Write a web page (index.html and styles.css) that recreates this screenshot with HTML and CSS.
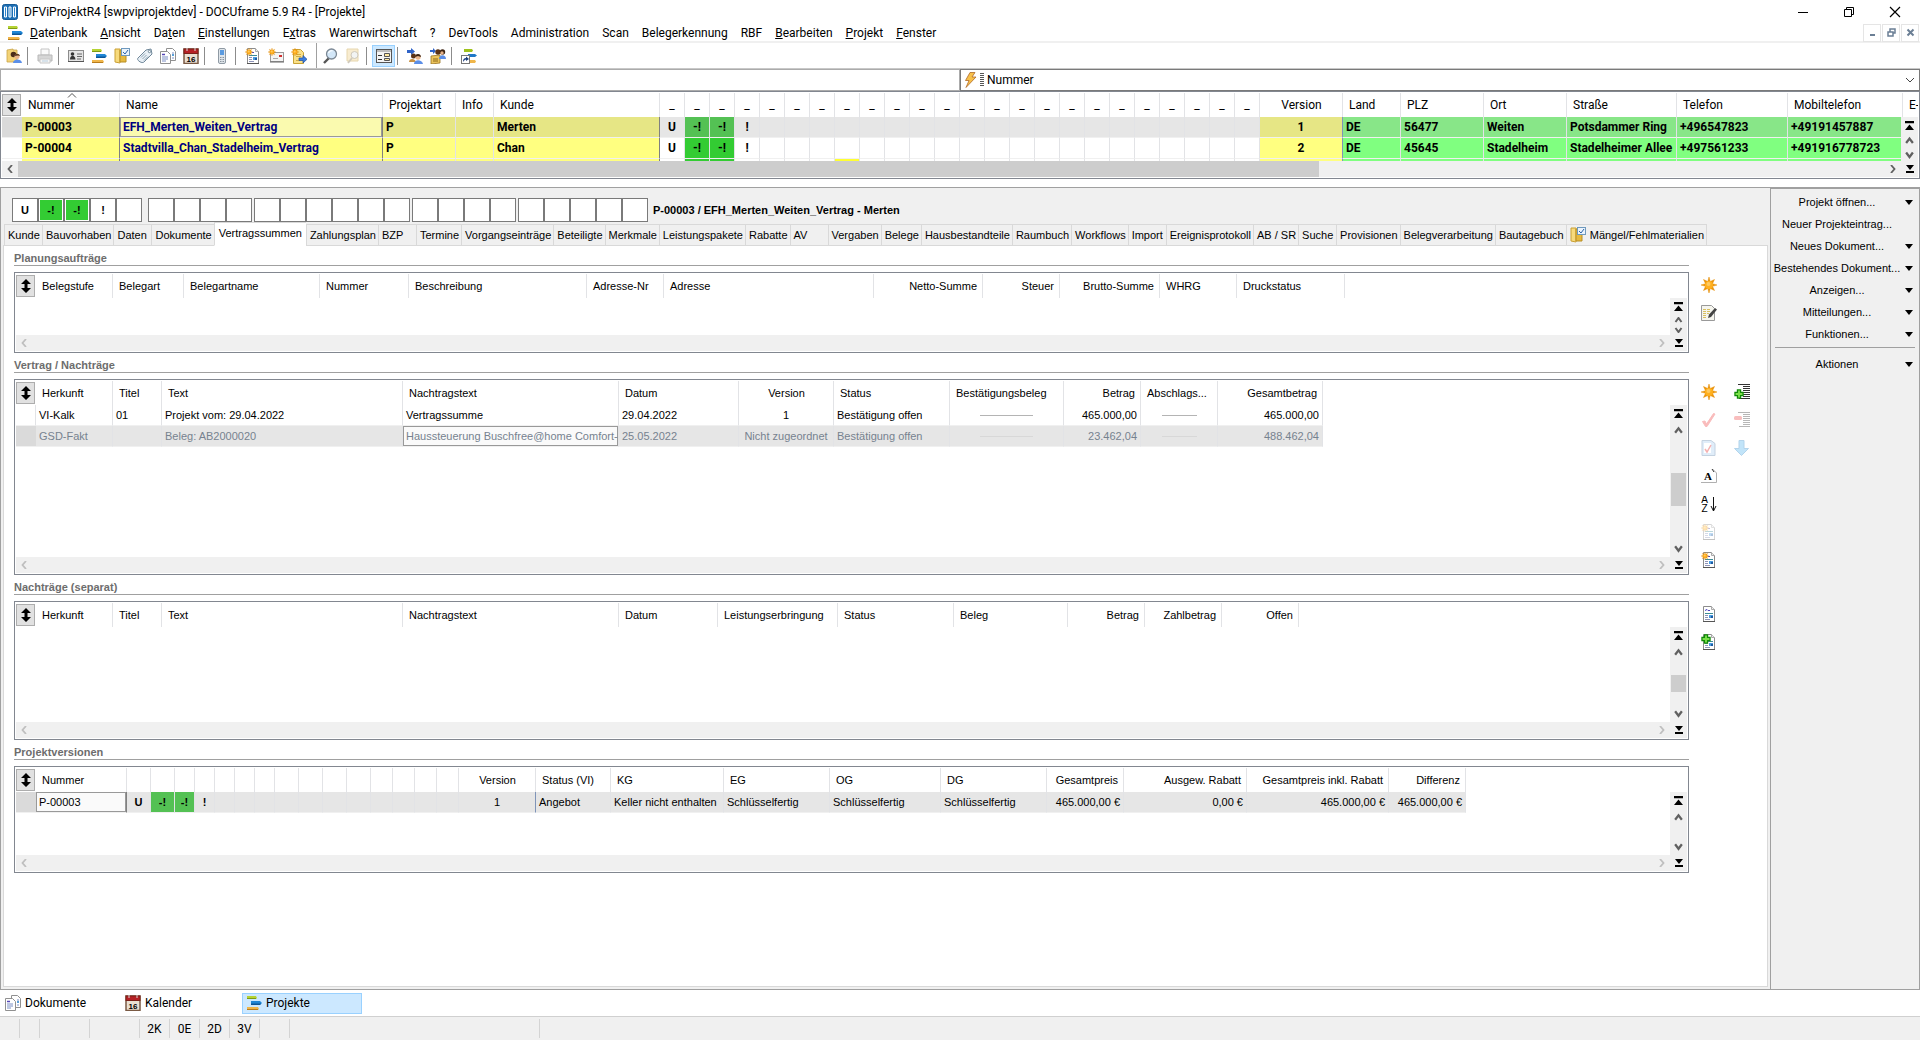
FILE: index.html
```html
<!DOCTYPE html>
<html lang="de">
<head>
    <meta charset="UTF-8">
    <meta name="viewport" content="width=device-width, initial-scale=1.0">
    <title>DFViProjektR4 [swpviprojektdev] - DOCUframe 5.9 R4 - [Projekte]</title>
    <link rel="stylesheet" href="styles.css">
</head>
<body>

    <!-- Icon sheet -->
    <svg class="sheet" aria-hidden="true">
        <symbol id="i-app" viewBox="0 0 16 16"><rect x=".5" y=".5" width="15" height="15" rx="2" fill="#1c6fb5" stroke="#175c98"/><path d="M2.500 3h2v10h-2zM7 3h2v10H7zM11.500 3h2v10h-2z" fill="#2f86cc" stroke="#fff"/></symbol>
        <symbol id="i-bars" viewBox="0 0 16 16"><path d="M1 1h9l1 2-1 1H1z" fill="#b5d334"/><path d="M1 3h9v1H1z" fill="#7f9b12"/><path d="M5 6h9l2 2-2 2H5z" fill="#1f86d6"/><path d="M5 8.500h10L14 10H5z" fill="#0c5698"/><path d="M1 12h11l1 2-1 1H1z" fill="#f0b64a"/><path d="M1 14h11v1H1z" fill="#b87c1c"/></symbol>
        <symbol id="i-userfolder" viewBox="0 0 16 16"><path d="M1 2l6-1v1h4v12H1z" fill="#f3d377" stroke="#c9a548" stroke-width=".8"/><circle cx="7.500" cy="6.500" r="2.800" fill="#4a2d1a"/><circle cx="11" cy="8.500" r="2.500" fill="#e8b48a"/><path d="M8.500 8c0-3 5-3 5.500 0l-2-.5z" fill="#5a3a20"/><path d="M7 15c0-4 8-5 9 0z" fill="#5b8fe8"/></symbol>
        <symbol id="i-printer" viewBox="0 0 16 16"><path d="M4 1h8v6H4z" fill="#fafafa" stroke="#c4c4c4"/><path d="M1 7h14v6H1z" fill="#d6d6d6" stroke="#b8b8b8"/><path d="M3 11h10v4H3z" fill="#f4f4f4" stroke="#c8c8c8"/><path d="M5 13h6" stroke="#b8cfe0"/></symbol>
        <symbol id="i-card" viewBox="0 0 16 16"><rect x=".5" y="2.500" width="15" height="11" fill="#e4e4e4" stroke="#8c8c8c"/><path d="M0 13.500h16" stroke="#555"/><circle cx="4.500" cy="6" r="1.800" fill="#333"/><path d="M2 11.500c0-5 5-5 5.500 0z" fill="#333"/><path d="M9 6h5M9 8.500h5M9 11h4" stroke="#666"/></symbol>
        <symbol id="i-foldercheck" viewBox="0 0 16 16"><path d="M1 1h5v14l-5-1z" fill="#f7da7c" stroke="#caa034"/><path d="M6 2h6v12H6z" fill="#e6b93e" stroke="#b88d22"/><rect x="7.500" y=".5" width="8" height="7" fill="#eaf3fc" stroke="#6f99bd"/><path d="M9 4l2 2 3-4" fill="none" stroke="#2b62a8"/></symbol>
        <symbol id="i-tag" viewBox="0 0 16 16"><path d="M1 10l8-8 5-1 1 5-8 8c-2 2-8-2-6-4z" fill="#e9f0f6" stroke="#6f8799"/><circle cx="12.500" cy="3.500" r="1.200" fill="#fff" stroke="#6f8799"/><path d="M4 9.500l4-4M5.500 11l4-4M7 12.500l4-4" stroke="#8fa5b5"/></symbol>
        <symbol id="i-docs" viewBox="0 0 16 16"><path d="M6.500.5h6l3 3v9h-9z" fill="#fff" stroke="#909090"/><path d="M.5 3.500h7l3 3v9H.5z" fill="#fff" stroke="#909090"/><path d="M2 6.500h3" stroke="#5546b8" stroke-width="1.500"/><path d="M2 9h6M2 11h6M2 13h4M12 5h2M12 7h2M12 10h2" stroke="#7a8ec4"/><path d="M12 6h2v2h-2z" fill="#58a0d8"/></symbol>
        <symbol id="i-calendar" viewBox="0 0 16 16"><rect x="1" y="1" width="14" height="14.500" fill="#eadfd2" stroke="#7a5a44" stroke-width="1.500"/><rect x="1" y="1" width="14" height="4.500" fill="#b62025" stroke="#7a2018"/><path d="M4 0v3M12 0v3" stroke="#ddd"/><text x="8" y="13.500" text-anchor="middle" class="cal-day">16</text></symbol>
        <symbol id="i-phone" viewBox="0 0 16 16"><rect x="4.500" y=".5" width="7" height="15" rx="1.500" fill="#dfe5ea" stroke="#8f9aa4"/><rect x="6" y="2" width="4" height="5" fill="#5b9be0"/><path d="M6 9.500h4M6 11.500h4M6 13.500h4" stroke="#8a949e" stroke-dasharray="1 .5"/></symbol>
        <symbol id="i-doc" viewBox="0 0 16 16"><path d="M2.500.5h8l3 3v12h-11z" fill="#fff" stroke="#8c8c8c"/><path d="M10.500.5v3h3" fill="#eee" stroke="#aaa"/><path d="M2 15.500h12" stroke="#555"/><path d="M4 4.500l2-1 1 1h2" fill="none" stroke="#4a3fc0"/><path d="M4 7.500h8" stroke="#3c8c96"/><path d="M4 9.500h3M4 11.500h3M4 13.500h5" stroke="#8d93b8"/><path d="M8 9h4v3H8z" fill="#4a9be0"/><path d="M10 10h2v2h-2z" fill="#1d5aa0"/></symbol>
        <symbol id="i-spark" viewBox="0 0 16 16"><path d="M8 0l1.200 4.500L13.500 2.500l-2 4.200L16 8l-4.500 1.300 2 4.200-4.300-2L8 16l-1.200-4.500-4.300 2 2-4.200L0 8l4.500-1.300-2-4.200 4.300 2z" fill="#e8920c" stroke="#e8920c" stroke-width=".5"/><circle cx="8" cy="8" r="4" fill="#ffb01e"/><circle cx="7.500" cy="7" r="2" fill="#ffc95e"/></symbol>
        <symbol id="i-plus" viewBox="0 0 16 16"><path d="M5.500 1.500h5v4h4v5h-4v4h-5v-4h-4v-5h4z" fill="#7be04a" stroke="#118a08" stroke-width="2"/></symbol>
        <symbol id="i-newdoc" viewBox="0 0 16 16"><use href="#i-doc"/><use href="#i-spark" width="8" height="8"/></symbol>
        <symbol id="i-docplus" viewBox="0 0 16 16"><use href="#i-doc"/><use href="#i-plus" width="10" height="10"/></symbol>
        <symbol id="i-mail" viewBox="0 0 16 16"><rect x="2.500" y="4.500" width="13" height="9" fill="#f4f4f4" stroke="#9a9a9a"/><path d="M2 14h14" stroke="#666"/><rect x="11" y="7" width="3" height="2" fill="#d03030"/><path d="M5 10.500h5" stroke="#aaa"/><use href="#i-spark" width="8" height="8"/></symbol>
        <symbol id="i-export" viewBox="0 0 16 16"><path d="M2.500 1.500h7l3 3v11h-10z" fill="#f9e08a" stroke="#c9a336"/><path d="M5 6.500h5M5 8.500h5M5 12.500h4" stroke="#d2ac44"/><path d="M8 10h4V7.500l4 3.800-4 3.700v-2.500H8z" fill="#3b7de0" stroke="#1c4f9e" stroke-width=".7"/><use href="#i-spark" width="8" height="8"/></symbol>
        <symbol id="i-lens" viewBox="0 0 16 16"><path d="M7 10l-5 5" stroke="#555" stroke-width="2.400"/><circle cx="9.500" cy="6" r="5" fill="#d3e7f8" stroke="#7c8894" stroke-width="1.300"/><path d="M6.500 5c1-2 3-2.500 4-2" stroke="#fff" fill="none" stroke-width="1.300"/></symbol>
        <symbol id="i-lensfolder" viewBox="0 0 16 16"><path d="M2 1h11v12H2z" fill="#f8ecd0" stroke="#e6d6ae"/><circle cx="9.500" cy="7" r="3.500" fill="#f2f4f4" stroke="#cfc9bb"/><path d="M7 10l-4 5" stroke="#cfc9bb" stroke-width="1.800"/></symbol>
        <symbol id="i-form" viewBox="0 0 16 16"><rect x=".5" y="1.500" width="15" height="13" fill="#f4f4f4" stroke="#555"/><path d="M1 3h14" stroke="#888"/><path d="M2 7.500h4M2 11.500h4" stroke="#333"/><path d="M8.500 5.500h5v3h-5zM8.500 10.500h5v2h-5z" fill="#ffe9a0" stroke="#555"/></symbol>
        <symbol id="i-people" viewBox="0 0 16 16"><path d="M0 2h4V0l4 3.500L4 7V5H0z" fill="#2f63c8"/><circle cx="6.500" cy="8" r="2.500" fill="#5a3216"/><circle cx="11" cy="9" r="2.700" fill="#e8b48a"/><path d="M8 9c0-4 6-4 6 0l-3-1z" fill="#3d2412"/><path d="M2 14c0-4 6-4 7 0z" fill="#c89040"/><path d="M7 16c0-5 8-5 9 0z" fill="#5b8fe8"/></symbol>
        <symbol id="i-peoplefolder" viewBox="0 0 16 16"><path d="M1 8l9-1v8l-9 1z" fill="#ecc45c" stroke="#9a7420" stroke-width=".8"/><path d="M3 11h5M3 13h5" stroke="#8c6818"/><path d="M0 2h3V0l3 3-3 3V4H0z" fill="#2f63c8"/><circle cx="8" cy="4" r="2.700" fill="#5a3216"/><circle cx="12.500" cy="4" r="2.700" fill="#3d2412"/><circle cx="12" cy="5" r="1.700" fill="#e8b48a"/><path d="M9 11c0-5 7-5 7 0z" fill="#5b8fe8"/></symbol>
        <symbol id="i-link" viewBox="0 0 16 16"><path d="M3 1h8l1 1.500L11 4H3z" fill="#9fc21c"/><path d="M7 6h7l2 1.500L14 9H7z" fill="#1f78c8"/><path d="M9 12h5l1 1.500-1 1.500H9z" fill="#f0b64a"/><rect x=".5" y="7.500" width="8" height="8" fill="#fff" stroke="#777"/><path d="M2 14c0-3 1-4 3-4V8.500L8 11l-3 2v-1.500c-1 0-2 1-3 2.500z" fill="#1c3f80"/></symbol>
        <symbol id="i-notepen" viewBox="0 0 16 16"><path d="M.5.500h10l3 3v12H.5z" fill="#f5f5ee" stroke="#999"/><path d="M2 4.500h8M2 6.500h8M2 8.500h6M2 10.500h4M2 12.500h4" stroke="#d8c060" stroke-dasharray="3 1"/><path d="M7 13l1-3.500L14 3l2 1.500L10 12z" fill="#444"/></symbol>
        <symbol id="i-lines" viewBox="0 0 16 16"><path d="M4 .5h12M9 2.500h7M9 4.500h7M9 6.500h7M9 8.500h7M9 10.500h7M9 12.500h7M5 14.500h11" stroke="#333"/></symbol>
        <symbol id="i-addrow" viewBox="0 0 16 16"><use href="#i-lines"/><use href="#i-plus" x="0" y="5" width="10" height="10"/></symbol>
        <symbol id="i-delrow" viewBox="0 0 16 16"><use href="#i-lines"/><rect x="0" y="4" width="8" height="4" rx="1.500" fill="#f04848"/></symbol>
        <symbol id="i-check" viewBox="0 0 16 16"><path d="M1.500 9.500L4 9l1.500 3L12.500 1.500l1.500.5L6 14.500H4.500z" fill="#f04040" stroke="#f04040"/></symbol>
        <symbol id="i-doccheck" viewBox="0 0 16 16"><path d="M1 .5h9l4 3v12H1z" fill="#a8cdf0" stroke="#5a7fa8"/><path d="M3 3h7v10H3z" fill="#fff"/><path d="M4 9l2 3 4-7" fill="none" stroke="#e02020" stroke-width="1.500"/></symbol>
        <symbol id="i-down" viewBox="0 0 16 16"><path d="M5 .5h5v8h4.500L7.500 15.500.5 8.500H5z" fill="#4fb4f0" stroke="#2a86c8"/></symbol>
        <symbol id="i-pagea" viewBox="0 0 16 16"><path d="M0 14.500h15.500V5l-4-4" fill="none" stroke="#b0b0b0"/><path d="M11 1l2 3" stroke="#333"/><text x="7" y="12" text-anchor="middle" class="letter-serif">A</text></symbol>
        <symbol id="i-az" viewBox="0 0 16 16"><text x="3.500" y="7" text-anchor="middle" class="letter">A</text><text x="3.500" y="16" text-anchor="middle" class="letter">Z</text><path d="M12.500 1v14M10 10l2.500 5 2.500-5" fill="none" stroke="#111"/></symbol>
        <symbol id="i-flash" viewBox="0 0 16 16"><path d="M7 .5h5L9 5h4L3 15.500 6 8.500H2.500z" fill="#f7c04a" stroke="#b06a28" stroke-width=".8"/></symbol>
        <symbol id="i-updown" viewBox="0 0 10 14"><path d="M5 0l5 5H6.500v4H10l-5 5-5-5h3.500V5H0z" fill="#000"/></symbol>
        <symbol id="i-first" viewBox="0 0 8 8"><path d="M0 0h8v2H0zM4 3l4 5H0z" fill="#000"/></symbol>
        <symbol id="i-last" viewBox="0 0 8 8"><path d="M0 6h8v2H0zM0 0h8L4 5z" fill="#000"/></symbol>
        <symbol id="i-up" viewBox="0 0 8 6"><path d="M1 5l3-4 3 4" fill="none" stroke="#606060" stroke-width="2"/></symbol>
        <symbol id="i-dn" viewBox="0 0 8 6"><path d="M1 1l3 4 3-4" fill="none" stroke="#606060" stroke-width="2"/></symbol>
        <symbol id="i-left" viewBox="0 0 6 8"><path d="M5 0L1.500 4 5 8" fill="none" stroke="currentColor" stroke-width="1.800"/></symbol>
        <symbol id="i-right" viewBox="0 0 6 8"><path d="M1 0l3.500 4L1 8" fill="none" stroke="currentColor" stroke-width="1.800"/></symbol>
        <symbol id="i-min" viewBox="0 0 12 12"><path d="M1 6.500h10" stroke="currentColor"/></symbol>
        <symbol id="i-restore" viewBox="0 0 12 12"><path d="M1.500 3.500h7v7h-7zM3.500 3.500v-2h7v7h-2" fill="none" stroke="currentColor"/></symbol>
        <symbol id="i-close" viewBox="0 0 12 12"><path d="M1 1l10 10M11 1L1 11" stroke="currentColor" stroke-width="1.200"/></symbol>
        <symbol id="i-mdi-min" viewBox="0 0 9 9"><path d="M2 7h5" stroke="currentColor" stroke-width="2"/></symbol>
        <symbol id="i-mdi-restore" viewBox="0 0 9 9"><path d="M1 4h5v4H1zM3 4V1h5v4H6" fill="none" stroke="currentColor" stroke-width="1.500"/></symbol>
        <symbol id="i-mdi-close" viewBox="0 0 9 9"><path d="M1.500 1.500l6 6M7.500 1.500l-6 6" stroke="currentColor" stroke-width="2"/></symbol>
    </svg>

    <!-- Title bar -->
    <header class="titlebar">
        <svg class="icon-app"><use href="#i-app"/></svg>
        <h1>DFViProjektR4 [swpviprojektdev] - DOCUframe 5.9 R4 - [Projekte]</h1>
        <div class="window-buttons">
            <button aria-label="Minimieren"><svg><use href="#i-min"/></svg></button>
            <button aria-label="Wiederherstellen"><svg><use href="#i-restore"/></svg></button>
            <button aria-label="Schließen"><svg><use href="#i-close"/></svg></button>
        </div>
    </header>

    <!-- Menu -->
    <nav class="menubar">
        <svg class="icon"><use href="#i-bars"/></svg>
        <a href="#"><u>D</u>atenbank</a>
        <a href="#"><u>A</u>nsicht</a>
        <a href="#">Da<u>t</u>en</a>
        <a href="#"><u>E</u>instellungen</a>
        <a href="#">E<u>x</u>tras</a>
        <a href="#">Warenwirtschaft</a>
        <a href="#">?</a>
        <a href="#">DevTools</a>
        <a href="#">Administration</a>
        <a href="#">Scan</a>
        <a href="#">Belegerkennung</a>
        <a href="#">RBF</a>
        <a href="#"><u>B</u>earbeiten</a>
        <a href="#"><u>P</u>rojekt</a>
        <a href="#"><u>F</u>enster</a>
        <div class="mdi-buttons">
            <button aria-label="Fenster minimieren"><svg><use href="#i-mdi-min"/></svg></button>
            <button aria-label="Fenster wiederherstellen"><svg><use href="#i-mdi-restore"/></svg></button>
            <button aria-label="Fenster schließen"><svg><use href="#i-mdi-close"/></svg></button>
        </div>
    </nav>

    <!-- Toolbar -->
    <div class="toolbar" role="toolbar">
        <button aria-label="Adressen"><svg class="icon"><use href="#i-userfolder"/></svg></button>
        <span class="sep"></span>
        <button aria-label="Drucken"><svg class="icon"><use href="#i-printer"/></svg></button>
        <span class="sep"></span>
        <button aria-label="Visitenkarte"><svg class="icon"><use href="#i-card"/></svg></button>
        <button aria-label="Projekte"><svg class="icon"><use href="#i-bars"/></svg></button>
        <button aria-label="Aufgaben"><svg class="icon"><use href="#i-foldercheck"/></svg></button>
        <button aria-label="Artikel"><svg class="icon"><use href="#i-tag"/></svg></button>
        <button aria-label="Dokumente"><svg class="icon"><use href="#i-docs"/></svg></button>
        <button aria-label="Kalender"><svg class="icon"><use href="#i-calendar"/></svg></button>
        <span class="sep"></span>
        <button aria-label="Telefon"><svg class="icon"><use href="#i-phone"/></svg></button>
        <span class="sep"></span>
        <button aria-label="Neues Dokument"><svg class="icon"><use href="#i-newdoc"/></svg></button>
        <button aria-label="Neue Nachricht"><svg class="icon"><use href="#i-mail"/></svg></button>
        <button aria-label="Export"><svg class="icon"><use href="#i-export"/></svg></button>
        <span class="sep sep-band"></span>
        <button aria-label="Suchen"><svg class="icon"><use href="#i-lens"/></svg></button>
        <button aria-label="In Ordner suchen"><svg class="icon"><use href="#i-lensfolder"/></svg></button>
        <span class="sep"></span>
        <button class="pressed" aria-label="Maske"><svg class="icon"><use href="#i-form"/></svg></button>
        <span class="sep"></span>
        <button aria-label="Adresse zuordnen"><svg class="icon"><use href="#i-people"/></svg></button>
        <button aria-label="Ordner zuordnen"><svg class="icon"><use href="#i-peoplefolder"/></svg></button>
        <span class="sep"></span>
        <button aria-label="Verknüpfung"><svg class="icon"><use href="#i-link"/></svg></button>
    </div>

    <!-- Search -->
    <div class="search">
        <input type="text" aria-label="Suchbegriff">
        <div class="search-field">
            <svg class="icon"><use href="#i-flash"/></svg>
            <span class="grip"></span>
            <select aria-label="Suchfeld"><option>Nummer</option></select>
            <svg class="caret" viewBox="0 0 10 6"><path d="M1 1l4 4 4-4" fill="none" stroke="#444"/></svg>
        </div>
    </div>

    <!-- Project list -->
    <div class="list project-list">
        <div class="table-wrap">
            <table class="fill">
                <colgroup><col class="w20"><col class="w98"><col class="w263"><col class="w73"><col class="w38"><col class="w166"><col span="24" class="w25"><col class="w83"><col class="w58"><col class="w83"><col class="w83"><col class="w110"><col class="w111"><col class="w115"><col></colgroup>
                <thead>
                    <tr><th class="rowsel"><button aria-label="Sortierung"><svg><use href="#i-updown"/></svg></button></th><th class="sorted">Nummer<svg class="sort" viewBox="0 0 10 5"><path d="M1 4.500l4-4 4 4" fill="none" stroke="#555"/></svg></th><th>Name</th><th>Projektart</th><th>Info</th><th>Kunde</th><th class="m">_</th><th class="m">_</th><th class="m">_</th><th class="m">_</th><th class="m">_</th><th class="m">_</th><th class="m">_</th><th class="m">_</th><th class="m">_</th><th class="m">_</th><th class="m">_</th><th class="m">_</th><th class="m">_</th><th class="m">_</th><th class="m">_</th><th class="m">_</th><th class="m">_</th><th class="m">_</th><th class="m">_</th><th class="m">_</th><th class="m">_</th><th class="m">_</th><th class="m">_</th><th class="m">_</th><th class="center">Version</th><th>Land</th><th>PLZ</th><th>Ort</th><th>Straße</th><th>Telefon</th><th>Mobiltelefon</th><th class="last">E-</th></tr>
                </thead>
                <tbody>
                    <tr class="current"><td class="rowsel"></td><td class="yellow edge">P-00003</td><td class="yellow focus edge">EFH_Merten_Weiten_Vertrag</td><td class="yellow">P</td><td class="yellow"></td><td class="yellow edge">Merten</td><td class="center">U</td><td class="center flag">-!</td><td class="center flag">-!</td><td class="center">!</td><td></td><td></td><td></td><td></td><td></td><td></td><td></td><td></td><td></td><td></td><td></td><td></td><td></td><td></td><td></td><td></td><td></td><td></td><td></td><td></td><td class="yellow center edge-blue">1</td><td class="green">DE</td><td class="green">56477</td><td class="green">Weiten</td><td class="green">Potsdammer Ring</td><td class="green">+496547823</td><td class="green">+49191457887</td><td></td></tr>
                    <tr><td class="rowsel"></td><td class="yellow edge">P-00004</td><td class="yellow link edge">Stadtvilla_Chan_Stadelheim_Vertrag</td><td class="yellow">P</td><td class="yellow"></td><td class="yellow edge">Chan</td><td class="center">U</td><td class="center flag">-!</td><td class="center flag">-!</td><td class="center">!</td><td></td><td></td><td></td><td></td><td></td><td></td><td></td><td></td><td></td><td></td><td></td><td></td><td></td><td></td><td></td><td></td><td></td><td></td><td></td><td></td><td class="yellow center edge-blue">2</td><td class="green">DE</td><td class="green">45645</td><td class="green">Stadelheim</td><td class="green">Stadelheimer Allee</td><td class="green">+497561233</td><td class="green">+491916778723</td><td></td></tr>
                    <tr><td class="rowsel"></td><td class="yellow edge"></td><td class="yellow edge"></td><td class="yellow"></td><td class="yellow"></td><td class="yellow edge"></td><td></td><td class="flag"></td><td class="flag"></td><td></td><td></td><td></td><td></td><td class="bright"></td><td></td><td></td><td></td><td></td><td></td><td></td><td></td><td></td><td></td><td></td><td></td><td></td><td></td><td></td><td></td><td></td><td class="yellow edge-blue"></td><td class="green"></td><td class="green"></td><td class="green"></td><td class="green"></td><td class="green"></td><td class="green"></td><td></td></tr>
                </tbody>
            </table>
        </div>
        <div class="vscroll"><svg class="end"><use href="#i-first"/></svg><svg class="arrow"><use href="#i-up"/></svg><span class="track"></span><svg class="arrow"><use href="#i-dn"/></svg></div>
        <div class="hscroll"><svg><use href="#i-left"/></svg><span class="hthumb"></span><svg><use href="#i-right"/></svg></div>
        <div class="corner"><svg><use href="#i-last"/></svg></div>
    </div>

    <!-- Detail view of the selected project -->
    <main class="detail">
        <div class="project">
            <div class="project-head">
                <div class="badges"><span>U</span><span class="on">-!</span><span class="on">-!</span><span>!</span><span></span></div>
                <div class="badges"><span></span><span></span><span></span><span></span></div>
                <div class="badges"><span></span><span></span><span></span><span></span><span></span><span></span></div>
                <div class="badges"><span></span><span></span><span></span><span></span></div>
                <div class="badges"><span></span><span></span><span></span><span></span><span></span></div>
                <h2>P-00003 / EFH_Merten_Weiten_Vertrag - Merten</h2>
            </div>

            <div class="tabs" role="tablist">
                <button role="tab">Kunde</button>
                <button role="tab">Bauvorhaben</button>
                <button role="tab">Daten</button>
                <button role="tab">Dokumente</button>
                <button role="tab" class="active" aria-selected="true">Vertragssummen</button>
                <button role="tab">Zahlungsplan</button>
                <button role="tab">BZP</button>
                <button role="tab">Termine</button>
                <button role="tab">Vorgangseinträge</button>
                <button role="tab">Beteiligte</button>
                <button role="tab">Merkmale</button>
                <button role="tab">Leistungspakete</button>
                <button role="tab">Rabatte</button>
                <button role="tab">AV</button>
                <button role="tab">Vergaben</button>
                <button role="tab">Belege</button>
                <button role="tab">Hausbestandteile</button>
                <button role="tab">Raumbuch</button>
                <button role="tab">Workflows</button>
                <button role="tab">Import</button>
                <button role="tab">Ereignisprotokoll</button>
                <button role="tab">AB / SR</button>
                <button role="tab">Suche</button>
                <button role="tab">Provisionen</button>
                <button role="tab">Belegverarbeitung</button>
                <button role="tab">Bautagebuch</button>
                <button role="tab"><svg class="icon"><use href="#i-foldercheck"/></svg>Mängel/Fehlmaterialien</button>
            </div>

            <div class="page">
                <!-- Planungsaufträge -->
                <section>
                    <h3>Planungsaufträge</h3>
                    <div class="section-row">
                        <div class="list h-small">
                            <div class="table-wrap">
                                <table>
                                    <colgroup><col class="w20"><col class="w77"><col class="w71"><col class="w136"><col class="w89"><col class="w178"><col class="w77"><col class="w210"><col class="w109"><col class="w77"><col class="w100"><col class="w77"><col class="w108"></colgroup>
                                    <thead>
                                        <tr><th class="rowsel"><button aria-label="Sortierung"><svg><use href="#i-updown"/></svg></button></th><th>Belegstufe</th><th>Belegart</th><th>Belegartname</th><th>Nummer</th><th>Beschreibung</th><th>Adresse-Nr</th><th>Adresse</th><th class="right">Netto-Summe</th><th class="right">Steuer</th><th class="right">Brutto-Summe</th><th>WHRG</th><th>Druckstatus</th></tr>
                                    </thead>
                                </table>
                            </div>
                            <div class="vscroll"><svg class="end"><use href="#i-first"/></svg><svg class="arrow"><use href="#i-up"/></svg><span class="track"></span><svg class="arrow"><use href="#i-dn"/></svg></div>
                            <div class="hscroll off"><svg><use href="#i-left"/></svg><span></span><svg><use href="#i-right"/></svg></div>
                            <div class="corner"><svg><use href="#i-last"/></svg></div>
                        </div>
                        <div class="actions">
                            <button aria-label="Neu"><svg class="icon"><use href="#i-spark"/></svg></button>
                            <button aria-label="Bearbeiten"><svg class="icon"><use href="#i-notepen"/></svg></button>
                        </div>
                    </div>
                </section>

                <!-- Vertrag / Nachträge -->
                <section>
                    <h3>Vertrag / Nachträge</h3>
                    <div class="section-row">
                        <div class="list h-large">
                            <div class="table-wrap">
                                <table>
                                    <colgroup><col class="w20"><col class="w77"><col class="w49"><col class="w241"><col class="w216"><col class="w120"><col class="w95"><col class="w116"><col class="w114"><col class="w77"><col class="w77"><col class="w105"></colgroup>
                                    <thead>
                                        <tr><th class="rowsel"><button aria-label="Sortierung"><svg><use href="#i-updown"/></svg></button></th><th>Herkunft</th><th>Titel</th><th>Text</th><th>Nachtragstext</th><th>Datum</th><th class="center">Version</th><th>Status</th><th>Bestätigungsbeleg</th><th class="right">Betrag</th><th>Abschlags...</th><th class="right">Gesamtbetrag</th></tr>
                                    </thead>
                                    <tbody>
                                        <tr><td></td><td>VI-Kalk</td><td>01</td><td>Projekt vom: 29.04.2022</td><td>Vertragssumme</td><td>29.04.2022</td><td class="center">1</td><td>Bestätigung offen</td><td><span class="dash"></span></td><td class="right">465.000,00</td><td><span class="dash"></span></td><td class="right">465.000,00</td></tr>
                                        <tr class="current dim"><td class="rowsel"></td><td>GSD-Fakt</td><td></td><td>Beleg: AB2000020</td><td class="focus">Haussteuerung Buschfree@home Comfort-</td><td>25.05.2022</td><td class="center">Nicht zugeordnet</td><td>Bestätigung offen</td><td><span class="dash"></span></td><td class="right">23.462,04</td><td><span class="dash"></span></td><td class="right">488.462,04</td></tr>
                                    </tbody>
                                </table>
                            </div>
                            <div class="vscroll"><svg class="end"><use href="#i-first"/></svg><svg class="arrow"><use href="#i-up"/></svg><span class="track"><span class="thumb tall"></span></span><svg class="arrow"><use href="#i-dn"/></svg></div>
                            <div class="hscroll off"><svg><use href="#i-left"/></svg><span></span><svg><use href="#i-right"/></svg></div>
                            <div class="corner"><svg><use href="#i-last"/></svg></div>
                        </div>
                        <div class="actions">
                            <button aria-label="Neu"><svg class="icon"><use href="#i-spark"/></svg></button>
                            <button class="disabled" disabled aria-label="Bestätigen"><svg class="icon"><use href="#i-check"/></svg></button>
                            <button class="disabled" disabled aria-label="Beleg bestätigen"><svg class="icon"><use href="#i-doccheck"/></svg></button>
                            <button aria-label="Text"><svg class="icon"><use href="#i-pagea"/></svg></button>
                            <button aria-label="Sortieren"><svg class="icon"><use href="#i-az"/></svg></button>
                            <button class="disabled" disabled aria-label="Neuer Beleg"><svg class="icon"><use href="#i-newdoc"/></svg></button>
                            <button aria-label="Neues Dokument"><svg class="icon"><use href="#i-newdoc"/></svg></button>
                        </div>
                        <div class="actions">
                            <button aria-label="Zeile hinzufügen"><svg class="icon"><use href="#i-addrow"/></svg></button>
                            <button class="disabled" disabled aria-label="Zeile entfernen"><svg class="icon"><use href="#i-delrow"/></svg></button>
                            <button class="disabled" disabled aria-label="Nach unten"><svg class="icon"><use href="#i-down"/></svg></button>
                        </div>
                    </div>
                </section>

                <!-- Nachträge (separat) -->
                <section>
                    <h3>Nachträge (separat)</h3>
                    <div class="section-row">
                        <div class="list h-medium">
                            <div class="table-wrap">
                                <table>
                                    <colgroup><col class="w20"><col class="w77"><col class="w49"><col class="w241"><col class="w216"><col class="w99"><col class="w120"><col class="w116"><col class="w114"><col class="w77"><col class="w77"><col class="w77"></colgroup>
                                    <thead>
                                        <tr><th class="rowsel"><button aria-label="Sortierung"><svg><use href="#i-updown"/></svg></button></th><th>Herkunft</th><th>Titel</th><th>Text</th><th>Nachtragstext</th><th>Datum</th><th>Leistungserbringung</th><th>Status</th><th>Beleg</th><th class="right">Betrag</th><th class="right">Zahlbetrag</th><th class="right">Offen</th></tr>
                                    </thead>
                                </table>
                            </div>
                            <div class="vscroll"><svg class="end"><use href="#i-first"/></svg><svg class="arrow"><use href="#i-up"/></svg><span class="track"><span class="thumb"></span></span><svg class="arrow"><use href="#i-dn"/></svg></div>
                            <div class="hscroll off"><svg><use href="#i-left"/></svg><span></span><svg><use href="#i-right"/></svg></div>
                            <div class="corner"><svg><use href="#i-last"/></svg></div>
                        </div>
                        <div class="actions">
                            <button aria-label="Dokument"><svg class="icon"><use href="#i-doc"/></svg></button>
                            <button aria-label="Dokument hinzufügen"><svg class="icon"><use href="#i-docplus"/></svg></button>
                        </div>
                    </div>
                </section>

                <!-- Projektversionen -->
                <section>
                    <h3>Projektversionen</h3>
                    <div class="section-row">
                        <div class="list h-versions">
                            <div class="table-wrap">
                                <table>
                                    <colgroup><col class="w20"><col class="w91"><col span="2" class="w24"><col span="5" class="w20"><col span="4" class="w24"><col span="4" class="w22"><col class="w77"><col class="w75"><col class="w113"><col class="w106"><col class="w111"><col class="w106"><col class="w77"><col class="w123"><col class="w142"><col class="w77"></colgroup>
                                    <thead>
                                        <tr><th class="rowsel"><button aria-label="Sortierung"><svg><use href="#i-updown"/></svg></button></th><th>Nummer</th><th></th><th></th><th></th><th></th><th></th><th></th><th></th><th></th><th></th><th></th><th></th><th></th><th></th><th></th><th></th><th class="center">Version</th><th>Status (VI)</th><th>KG</th><th>EG</th><th>OG</th><th>DG</th><th class="right">Gesamtpreis</th><th class="right">Ausgew. Rabatt</th><th class="right">Gesamtpreis inkl. Rabatt</th><th class="right">Differenz</th></tr>
                                    </thead>
                                    <tbody>
                                        <tr class="current"><td class="rowsel"></td><td class="focus edge">P-00003</td><td class="center strong">U</td><td class="center strong flag">-!</td><td class="center strong flag">-!</td><td class="center strong">!</td><td></td><td></td><td></td><td></td><td></td><td></td><td></td><td></td><td></td><td></td><td></td><td class="center edge-blue">1</td><td>Angebot</td><td>Keller nicht enthalten</td><td>Schlüsselfertig</td><td>Schlüsselfertig</td><td>Schlüsselfertig</td><td class="right">465.000,00 €</td><td class="right">0,00 €</td><td class="right">465.000,00 €</td><td class="right">465.000,00 €</td></tr>
                                    </tbody>
                                </table>
                            </div>
                            <div class="vscroll"><svg class="end"><use href="#i-first"/></svg><svg class="arrow"><use href="#i-up"/></svg><span class="track"></span><svg class="arrow"><use href="#i-dn"/></svg></div>
                            <div class="hscroll off"><svg><use href="#i-left"/></svg><span></span><svg><use href="#i-right"/></svg></div>
                            <div class="corner"><svg><use href="#i-last"/></svg></div>
                        </div>
                        <div class="actions"></div>
                    </div>
                </section>
            </div>
        </div>

        <!-- Commands -->
        <aside class="commands">
            <button class="drop">Projekt öffnen...</button>
            <button>Neuer Projekteintrag...</button>
            <button class="drop">Neues Dokument...</button>
            <button class="drop">Bestehendes Dokument...</button>
            <button class="drop">Anzeigen...</button>
            <button class="drop">Mitteilungen...</button>
            <button class="drop">Funktionen...</button>
            <hr>
            <button class="drop">Aktionen</button>
        </aside>
    </main>

    <!-- Open windows -->
    <nav class="windows">
        <a href="#"><svg class="icon"><use href="#i-docs"/></svg>Dokumente</a>
        <a href="#"><svg class="icon"><use href="#i-calendar"/></svg>Kalender</a>
        <a href="#" class="active"><svg class="icon"><use href="#i-bars"/></svg>Projekte</a>
    </nav>

    <footer class="status">
        <span class="w20"></span><span class="w20"></span><span class="w50"></span><span class="w50"></span><span class="w30">2K</span><span class="w30">0E</span><span class="w30">2D</span><span class="w30">3V</span><span class="w30"></span><span class="w250"></span>
    </footer>

</body>
</html>
```

FILE: styles.css
```css
* {
    box-sizing: border-box;
}

body {
    display: flex;
    flex-direction: column;
    min-height: 100vh;
    margin: 0;
    font-family: Roboto, "Open Sans", sans-serif;
    font-size: 12px;
    color: #000;
    background-color: #fff;
}

button {
    display: flex;
    align-items: center;
    justify-content: center;
    margin: 0;
    padding: 0;
    border: none;
    background: none;
    font: inherit;
    color: inherit;
}

a {
    color: inherit;
    text-decoration: none;
}

h1, h2, h3 {
    margin: 0;
    font-size: inherit;
}

.sheet {
    display: none;
}

.icon {
    flex: none;
    width: 16px;
    height: 16px;
}

.cal-day {
    font: bold 8px "Liberation Sans", sans-serif;
}

.letter {
    font: 10px "Liberation Sans", sans-serif;
}

.letter-serif {
    font: bold 11px "Liberation Serif", serif;
}

/* Title bar */
.titlebar {
    display: flex;
    align-items: center;
    gap: 6px;
    height: 24px;
    padding-left: 2px;
}

.titlebar h1 {
    flex: 1;
    font-weight: normal;
}

.icon-app {
    width: 16px;
    height: 16px;
}

.window-buttons {
    display: flex;
    padding-right: 2px;
}

.window-buttons button {
    width: 46px;
    height: 20px;
}

.window-buttons svg {
    width: 12px;
    height: 12px;
}

/* Menu */
.menubar {
    display: flex;
    align-items: center;
    gap: 13px;
    height: 19px;
    padding-left: 7px;
    border-bottom: 2px solid #f0f0f0;
}

.menubar .icon {
    margin-right: -6px;
}

.mdi-buttons {
    display: flex;
    gap: 1px;
    margin-left: auto;
    padding-right: 1px;
}

.mdi-buttons button {
    width: 18px;
    height: 18px;
    border: 1px solid #e5e5e5;
    color: #6b7f95;
}

.mdi-buttons svg {
    width: 9px;
    height: 9px;
}

/* Toolbar */
.toolbar {
    display: flex;
    align-items: center;
    height: 26px;
    padding-left: 2px;
    border-bottom: 1px solid #c8c8c8;
}

.toolbar button {
    width: 23px;
    height: 22px;
}

.toolbar .pressed {
    background-color: #cce8ff;
    border: 1px solid #99d1ff;
}

.sep {
    width: 1px;
    height: 18px;
    margin: 0 5px 0 2px;
    background-color: #8c8c8c;
}

.sep-band {
    width: 1px;
    height: 25px;
    margin: 0 1px 0 6px;
    background-color: #a0a0a0;
}

/* Search */
.search {
    display: grid;
    grid-template-columns: 1fr 1fr;
    height: 22px;
}

.search input {
    border: 1px solid #ababab;
    font: inherit;
    outline: none;
}

.search-field {
    display: flex;
    align-items: center;
    gap: 1px;
    padding: 0 4px 0 2px;
    border: 1px solid #7a7a7a;
}

.search-field select {
    flex: 1;
    padding: 0 2px;
    border: none;
    background: none;
    font: inherit;
    appearance: none;
}

.grip {
    width: 4px;
    height: 14px;
    background: repeating-linear-gradient(#555 0 1px, #fff 1px 2px);
}

.caret {
    width: 10px;
    height: 6px;
}

/* Lists */
.list {
    display: grid;
    grid-template-columns: minmax(0, 1fr) 17px;
    grid-template-rows: 24px 1fr 16px;
    flex: 1;
    min-width: 0;
    padding: 1px;
    border: 1px solid #828790;
    background-color: #fff;
}

.project-list {
    flex: none;
    height: 88px;
}

.h-small {
    height: 81px;
}

.h-large {
    height: 196px;
}

.h-medium {
    height: 139px;
}

.h-versions {
    height: 107px;
}

.table-wrap {
    grid-area: 1 / 1 / 3 / 3;
    overflow: hidden;
}

table {
    width: 1px;
    table-layout: fixed;
    border-collapse: separate;
    border-spacing: 0;
}

table.fill {
    width: 100%;
}

th, td {
    overflow: hidden;
    border-right: 1px solid #e2e3e6;
    text-align: left;
    white-space: nowrap;
}

th {
    height: 24px;
    padding: 0 5px 0 6px;
    font-weight: normal;
}

th.last {
    padding-right: 0;
    border-right: none;
}

td {
    height: 21px;
    padding: 0 3px 1px;
    border-bottom: 1px solid #f0f0f0;
}

.center {
    text-align: center;
}

.right {
    text-align: right;
}

.strong {
    font-weight: bold;
}

th.m {
    text-align: center;
    padding: 0;
}

th.rowsel {
    padding: 0;
    border: none;
}

th.rowsel button {
    width: 19px;
    height: 22px;
    border: 1px solid #adadad;
    background-color: #e1e1e1;
}

th.rowsel svg {
    width: 10px;
    height: 14px;
}

td.rowsel {
    border-right: none;
}

th.sorted {
    position: relative;
}

.sort {
    position: absolute;
    top: 0;
    left: 45px;
    width: 10px;
    height: 5px;
}

.project-list td {
    font-weight: bold;
}

.current td {
    background-color: #e6e6e6;
}

.current .rowsel {
    background-color: #dadada;
}

.yellow, .yellow.focus {
    background-color: #ffff80;
}

.current .yellow {
    background-color: #e6e685;
}

.green {
    background-color: #80ff80;
}

.current .green {
    background-color: #88e688;
}

.flag {
    background-color: #33cc33;
}

.current .flag {
    background-color: #54c154;
}

.bright {
    background-color: #ffff33;
}

.edge {
    border-right-color: #808080;
}

.edge-blue {
    border-right-color: #7f94b8;
}

.link {
    color: #000080;
}

.current .focus {
    background-color: #fafafa;
    box-shadow: inset 0 0 0 1px #999;
}

.current .yellow.focus {
    background-color: #fafaaf;
    color: #000080;
}

.dim {
    color: #76828f;
}

.dash {
    display: block;
    width: 50%;
    height: 1px;
    margin: 2px auto 0;
    background-color: #b4b4b4;
}

.dim .dash {
    background-color: #d8d8d8;
}

/* Scrollbars */
.vscroll {
    grid-area: 2 / 2;
    display: flex;
    flex-direction: column;
    min-height: 0;
    background-color: #f0f0f0;
    z-index: 1;
}

.vscroll .end {
    flex: none;
    width: 17px;
    height: 17px;
    padding: 4px;
}

.vscroll .arrow {
    flex: 0 1 17px;
    width: 17px;
    min-height: 0;
    padding: 2px 4px;
}

.track {
    flex: 1 1 0;
    display: flex;
    align-items: center;
}

.thumb {
    width: 15px;
    height: 17px;
    margin: 0 1px;
    background-color: #cdcdcd;
}

.thumb.tall {
    height: 33px;
}

.hscroll {
    grid-area: 3 / 1;
    display: flex;
    align-items: center;
    justify-content: space-between;
    background-color: #f0f0f0;
    color: #606060;
}

.hscroll.off {
    color: #bfbfbf;
}

.hscroll svg {
    flex: none;
    width: 6px;
    height: 8px;
    margin: 0 5px;
}

.hthumb {
    align-self: stretch;
    width: 68.5%;
    margin-right: auto;
    background-color: #cdcdcd;
}

.corner {
    grid-area: 3 / 2;
    display: flex;
    align-items: center;
    justify-content: center;
    background-color: #f0f0f0;
}

.corner svg {
    width: 8px;
    height: 8px;
}

/* Detail view */
.detail {
    display: flex;
    flex: 1;
    margin-top: 8px;
    border: 1px solid #a0a0a0;
    background-color: #f0f0f0;
    font-family: "Liberation Sans", Arial, sans-serif;
    font-size: 11px;
}

.project {
    display: flex;
    flex-direction: column;
    flex: 1;
    min-width: 0;
    padding: 10px 2px 2px;
}

.project-head {
    display: flex;
    align-items: center;
    gap: 2px;
    padding-left: 9px;
}

.project-head h2 {
    padding-left: 3px;
}

.badges {
    display: flex;
}

.badges:first-child {
    margin-right: 4px;
}

.badges span {
    width: 26px;
    height: 24px;
    border: 1px solid #7a7a7a;
    background-color: #fff;
    font-weight: bold;
    line-height: 22px;
    text-align: center;
}

.badges .on {
    background-color: #33cc33;
    box-shadow: inset 0 0 0 1px #fff;
}

.tabs {
    display: flex;
    align-items: flex-end;
    margin-bottom: -1px;
    padding-left: 1px;
    white-space: nowrap;
}

.tabs button {
    min-width: 38px;
    height: 22px;
    padding: 0 2px 0 3px;
    border: 1px solid #d9d9d9;
    border-right-width: 0;
    justify-content: flex-start;
}

.tabs button:last-child {
    gap: 4px;
    border-right-width: 1px;
}

.tabs .active {
    height: 24px;
    padding: 0 4px 3px;
    border-bottom-color: #fff;
    background-color: #fff;
    z-index: 1;
}

.page {
    flex: 1;
    padding-left: 10px;
    border: 1px solid #d9d9d9;
    background-color: #fff;
}

.page h3 {
    height: 20px;
    margin: 0 78px 6px 0;
    border-bottom: 1px solid #a0a0a0;
    line-height: 24px;
    color: #6d6d6d;
}

.section-row {
    display: flex;
}

.actions {
    display: flex;
    flex-direction: column;
    gap: 12px;
    width: 33px;
    padding: 5px 0 0 12px;
}

.actions:last-child {
    width: 45px;
}

.actions:nth-child(2):last-child {
    width: 78px;
}

.actions button {
    width: 16px;
    height: 16px;
}

.actions .disabled {
    opacity: 0.35;
}

/* Commands */
.commands {
    width: 149px;
    padding: 2px 2px 0;
    border-left: 1px solid #a0a0a0;
    border-top: 1px solid #a0a0a0;
}

.commands button {
    display: grid;
    grid-template-columns: 1fr 16px;
    justify-items: center;
    width: 100%;
    height: 22px;
    white-space: nowrap;
}

.commands .drop::after {
    content: "";
    border: 4px solid transparent;
    border-top: 5px solid #000;
    border-bottom: none;
}

.commands hr {
    height: 1px;
    margin: 2px 2px 5px;
    border: none;
    background-color: #a0a0a0;
}

/* Open windows */
.windows {
    display: flex;
    align-items: center;
    height: 26px;
    padding-left: 2px;
}

.windows a {
    display: flex;
    align-items: center;
    gap: 4px;
    width: 120px;
    height: 21px;
    padding-left: 3px;
}

.windows .active {
    border: 1px solid #99d1ff;
    background-color: #cce8ff;
}

.status {
    display: flex;
    height: 24px;
    padding: 2px 0;
    border-top: 1px solid #d0d0d0;
    background-color: #f0f0f0;
    line-height: 20px;
}

.status span {
    border-right: 1px solid #d4d4d4;
    text-align: center;
}

/* Column widths */
.w20 { width: 20px; }
.w22 { width: 22px; }
.w24 { width: 24px; }
.w25 { width: 25px; }
.w30 { width: 30px; }
.w38 { width: 38px; }
.w49 { width: 49px; }
.w50 { width: 50px; }
.w58 { width: 58px; }
.w71 { width: 71px; }
.w73 { width: 73px; }
.w75 { width: 75px; }
.w77 { width: 77px; }
.w83 { width: 83px; }
.w89 { width: 89px; }
.w91 { width: 91px; }
.w95 { width: 95px; }
.w98 { width: 98px; }
.w99 { width: 99px; }
.w100 { width: 100px; }
.w105 { width: 105px; }
.w106 { width: 106px; }
.w108 { width: 108px; }
.w109 { width: 109px; }
.w110 { width: 110px; }
.w111 { width: 111px; }
.w113 { width: 113px; }
.w114 { width: 114px; }
.w115 { width: 115px; }
.w116 { width: 116px; }
.w120 { width: 120px; }
.w123 { width: 123px; }
.w136 { width: 136px; }
.w142 { width: 142px; }
.w166 { width: 166px; }
.w178 { width: 178px; }
.w210 { width: 210px; }
.w216 { width: 216px; }
.w241 { width: 241px; }
.w250 { width: 250px; }
.w263 { width: 263px; }
```
